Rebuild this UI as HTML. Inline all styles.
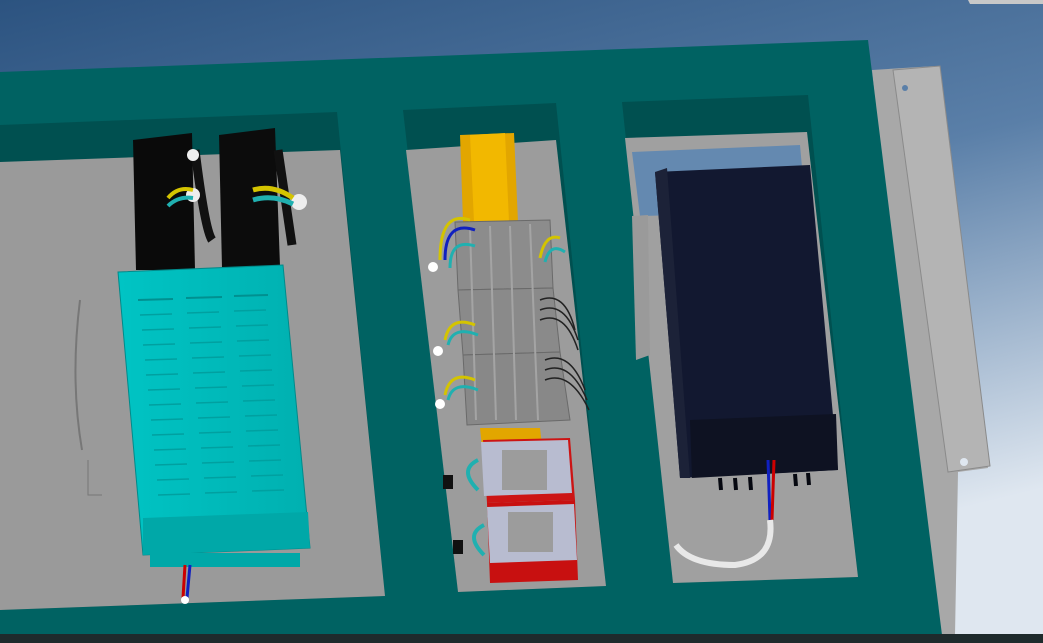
<!DOCTYPE html>
<html><head><meta charset="utf-8"><style>
html,body{margin:0;padding:0;width:1043px;height:643px;overflow:hidden}
svg{display:block}
</style></head><body>
<svg width="1043" height="643" viewBox="0 0 1043 643" xmlns="http://www.w3.org/2000/svg">
<defs>
<linearGradient id="bg" x1="0" y1="0" x2="0.4" y2="1">
<stop offset="0" stop-color="#2c5380"/><stop offset="0.5" stop-color="#5a7fa8"/><stop offset="1" stop-color="#dfe7f0"/>
</linearGradient>
<linearGradient id="cy" x1="0" y1="0" x2="1" y2="0">
<stop offset="0" stop-color="#00c4c4"/><stop offset="1" stop-color="#00b0b0"/>
</linearGradient>
</defs>
<rect width="1043" height="643" fill="url(#bg)"/>
<polygon points="968,0 1043,0 1043,4 970,4" fill="#c8c8c8"/>
<!-- right gray plate -->
<polygon points="872,70 935,66 988,468 958,472 955,635 930,635" fill="#a8a8a8"/>
<polygon points="893,70 940,66 990,466 948,472" fill="#b4b4b4" stroke="#8a8a8a"/>
<circle cx="905" cy="88" r="3" fill="#5a7fa8"/><circle cx="964" cy="462" r="4" fill="#dfe7f0"/>
<!-- green frame -->
<polygon points="0,72 868,40 942,635 0,640" fill="#006262"/>
<rect x="0" y="634" width="1043" height="9" fill="#1e2a2c"/>
<!-- left opening -->
<polygon points="0,125 337,112 385,596 0,610" fill="#005050"/>
<polygon points="0,162 340,150 385,596 0,610" fill="#9a9a9a"/>
<!-- middle opening -->
<polygon points="403,110 556,103 606,586 458,592" fill="#005050"/>
<polygon points="406,150 556,140 606,586 458,592" fill="#9c9c9c"/>
<!-- right opening -->
<polygon points="622,102 808,95 858,577 673,583" fill="#005050"/>
<polygon points="625,138 807,132 858,577 673,583" fill="#a0a0a0"/>
<polygon points="632,152 800,145 806,212 640,216" fill="#6489b0"/>
<polygon points="632,216 648,215 650,355 636,360" fill="#9a9a9a"/>
<!-- black transformers -->
<polygon points="133,140 192,133 195,270 136,270" fill="#0a0a0a"/>
<polygon points="219,135 275,128 280,266 222,268" fill="#0c0c0c"/>
<path d="M195,150 Q205,230 212,240" stroke="#111" stroke-width="9" fill="none"/>
<path d="M278,150 Q290,230 292,245" stroke="#111" stroke-width="9" fill="none"/>
<circle cx="193" cy="155" r="6" fill="#eee"/><circle cx="193" cy="195" r="7" fill="#eee"/><circle cx="299" cy="202" r="8" fill="#eee"/>
<path d="M168,198 q10,-12 25,-8" stroke="#d4c400" stroke-width="4" fill="none"/>
<path d="M168,206 q10,-10 25,-8" stroke="#20b0b0" stroke-width="4" fill="none"/>
<path d="M253,190 q20,-6 40,8" stroke="#d4c400" stroke-width="5" fill="none"/>
<path d="M253,200 q20,-6 40,4" stroke="#20b0b0" stroke-width="5" fill="none"/>
<!-- cyan PSU -->
<polygon points="118,272 283,265 310,548 143,555" fill="url(#cy)" stroke="#008a8a"/>
<g stroke="#009090" stroke-width="2">
<line x1="138" y1="300" x2="173" y2="299"/><line x1="186" y1="298" x2="222" y2="297"/><line x1="234" y1="296" x2="268" y2="295"/>
</g>
<g stroke="#00a0a0" stroke-width="1.5" id="slots">
<line x1="140" y1="315" x2="172" y2="314"/><line x1="142" y1="330" x2="174" y2="329"/><line x1="143" y1="345" x2="175" y2="344"/><line x1="145" y1="360" x2="177" y2="359"/><line x1="146" y1="375" x2="178" y2="374"/><line x1="148" y1="390" x2="180" y2="389"/><line x1="149" y1="405" x2="181" y2="404"/><line x1="151" y1="420" x2="183" y2="419"/><line x1="152" y1="435" x2="184" y2="434"/><line x1="154" y1="450" x2="186" y2="449"/><line x1="155" y1="465" x2="187" y2="464"/><line x1="157" y1="480" x2="189" y2="479"/><line x1="158" y1="495" x2="190" y2="494"/>
</g>
<use href="#slots" transform="translate(47,-2)"/>
<use href="#slots" transform="translate(94,-4)"/>
<polygon points="143,518 308,512 310,548 143,555" fill="#00a8a8"/>
<rect x="150" y="553" width="150" height="14" fill="#00a8a8"/>
<path d="M185,565 L183,598" stroke="#c00" stroke-width="3"/><path d="M190,565 L187,598" stroke="#1020c0" stroke-width="3"/>
<circle cx="185" cy="600" r="4" fill="#fff"/>
<!-- left plate marks -->
<path d="M80,300 Q70,380 82,450" stroke="#777" stroke-width="2" fill="none"/>
<path d="M88,460 L88,495 L102,495" stroke="#777" fill="none"/>
<!-- yellow rail -->
<polygon points="460,135 514,133 518,222 463,222" fill="#e2a600"/>
<polygon points="470,135 505,133 509,222 474,222" fill="#f2b800"/>
<polygon points="480,428 540,428 542,445 482,447" fill="#e2a600"/>
<!-- gray terminal blocks -->
<polygon points="455,222 550,220 553,288 458,290" fill="#8c8c8c" stroke="#6a6a6a"/>
<polygon points="458,290 553,288 560,352 463,355" fill="#8a8a8a" stroke="#6a6a6a"/>
<polygon points="463,355 560,352 570,420 467,425" fill="#888" stroke="#6a6a6a"/>
<g stroke="#a4a4a4" stroke-width="2">
<line x1="470" y1="228" x2="476" y2="420"/><line x1="490" y1="226" x2="496" y2="420"/><line x1="510" y1="226" x2="516" y2="420"/><line x1="530" y1="224" x2="538" y2="420"/>
</g>
<g fill="none" stroke-width="3">
<path d="M440,260 q0,-50 30,-40" stroke="#d4c400"/><path d="M445,260 q0,-40 30,-30" stroke="#1020c0"/><path d="M450,268 q0,-30 25,-22" stroke="#20b0b0"/>
<path d="M540,258 q5,-25 20,-20" stroke="#d4c400"/><path d="M545,262 q5,-20 20,-10" stroke="#20b0b0"/>
<path d="M445,340 q5,-25 30,-15" stroke="#d4c400"/><path d="M448,345 q5,-20 30,-10" stroke="#20b0b0"/>
<path d="M445,395 q5,-25 30,-15" stroke="#d4c400"/><path d="M448,400 q5,-20 30,-10" stroke="#20b0b0"/>
</g>
<g fill="none" stroke="#222" stroke-width="1.5">
<path d="M540,300 q25,-10 35,30"/><path d="M540,310 q25,-10 38,30"/><path d="M540,320 q25,-10 38,30"/>
<path d="M545,360 q25,-10 40,30"/><path d="M545,370 q25,-10 42,30"/><path d="M545,380 q25,-10 44,30"/>
</g>
<circle cx="433" cy="267" r="5" fill="#fff"/><circle cx="438" cy="351" r="5" fill="#fff"/><circle cx="440" cy="404" r="5" fill="#fff"/>
<!-- red relays -->
<polygon points="483,440 570,438 575,500 487,503" fill="#cc1414"/>
<polygon points="487,503 575,500 578,580 490,583" fill="#c81010"/>
<polygon points="481,442 568,440 572,493 484,496" fill="#b8bcd0"/>
<polygon points="487,507 574,504 577,560 490,563" fill="#b8bcd0"/>
<rect x="502" y="450" width="45" height="40" fill="#9c9c9c"/>
<rect x="508" y="512" width="45" height="40" fill="#9c9c9c"/>
<path d="M478,460 q-20,10 0,30" stroke="#20b0b0" stroke-width="4" fill="none"/>
<path d="M484,525 q-20,10 0,30" stroke="#20b0b0" stroke-width="4" fill="none"/>
<rect x="443" y="475" width="10" height="14" fill="#111"/><rect x="453" y="540" width="10" height="14" fill="#111"/>
<!-- black box -->
<polygon points="655,172 810,165 838,470 680,478" fill="#121830"/>
<polygon points="655,172 667,168 690,478 680,478" fill="#1c2238"/>
<polygon points="690,420 836,414 838,470 692,478" fill="#0e1222"/>
<g stroke="#060810" stroke-width="4"><line x1="720" y1="478" x2="721" y2="490"/><line x1="735" y1="478" x2="736" y2="490"/><line x1="750" y1="477" x2="751" y2="490"/><line x1="795" y1="474" x2="796" y2="486"/><line x1="808" y1="473" x2="809" y2="485"/></g>
<path d="M768,460 L770,520" stroke="#1020c0" stroke-width="3"/><path d="M774,460 L772,520" stroke="#c00" stroke-width="3"/>
<path d="M770,520 Q775,560 735,565 Q690,565 676,545" stroke="#e8e8e8" stroke-width="6" fill="none"/>
</svg>
</body></html>
